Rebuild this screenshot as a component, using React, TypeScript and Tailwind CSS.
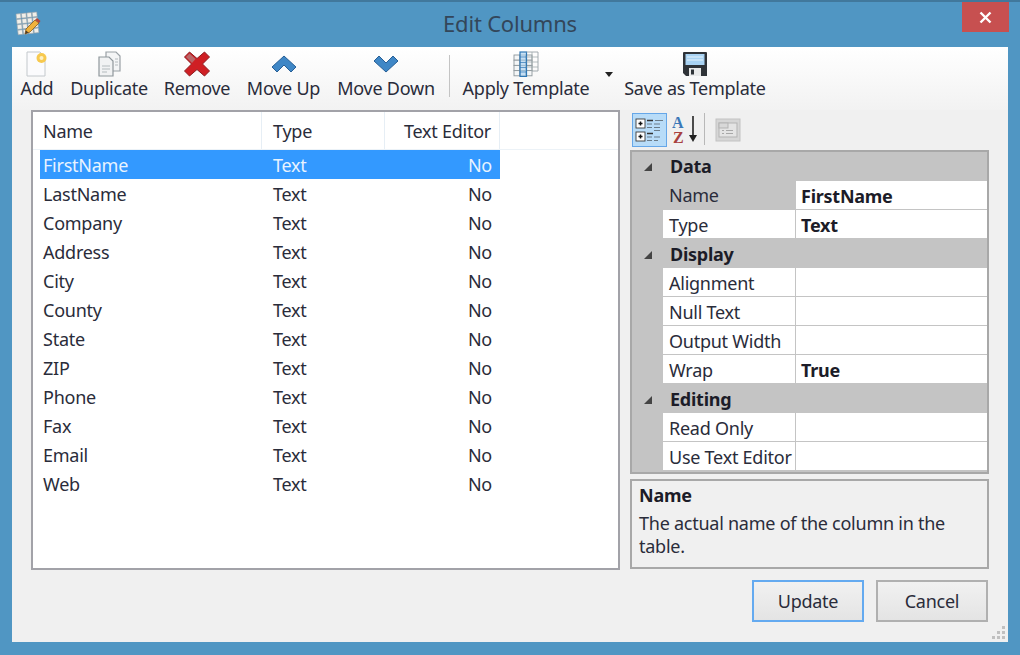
import React from "react";

const font = { fontFamily: '"Noto Sans", "Open Sans", sans-serif' };

const columns = ["FirstName", "LastName", "Company", "Address", "City", "County", "State", "ZIP", "Phone", "Fax", "Email", "Web"];

const groups = [
  { title: "Data", rows: [["Name", "FirstName"], ["Type", "Text"]] },
  { title: "Display", rows: [["Alignment", ""], ["Null Text", ""], ["Output Width", ""], ["Wrap", "True"]] },
  { title: "Editing", rows: [["Read Only", ""], ["Use Text Editor", ""]] },
];

const AppIcon = () => (
  <svg width="26" height="26" viewBox="0 0 26 26">
    <g fill="#f1efe9" stroke="#9aa4aa" strokeWidth="0.6" transform="rotate(-6 12 12)">
      {[0, 1, 2, 3].map((r) =>
        [0, 1, 2, 3].map((c) => <rect key={`${r}-${c}`} x={2 + c * 5.4} y={2 + r * 5.4} width="4.6" height="4.6" />)
      )}
    </g>
    <path d="M10 23 L11 18 L20 9 L24 12 L15 21 Z" fill="#f0b23c" stroke="#8a5a16" strokeWidth="0.8" />
    <path d="M20 9 L22 7 L25.5 10 L24 12 Z" fill="#b5473a" />
    <path d="M10 23 L11 19.5 L13.5 21.5 Z" fill="#4a3a2a" />
  </svg>
);

const AddIcon = () => (
  <svg width="26" height="26" viewBox="0 0 26 26">
    <path d="M3 1 H16 L21 6 V25 H3 Z" fill="#fbfbfd" stroke="#c3c8cc" strokeWidth="1" />
    <circle cx="17.5" cy="7" r="5" fill="#f7c94e" />
    <circle cx="17.5" cy="7" r="2" fill="#fdf0c4" />
  </svg>
);

const DuplicateIcon = () => (
  <svg width="26" height="26" viewBox="0 0 26 26">
    <path d="M10 1 H20 L24 5 V20 H10 Z" fill="#f4f5f6" stroke="#9aa1a6" strokeWidth="1.2" />
    <path d="M3 6 H13 L17 10 V25 H3 Z" fill="#f1f2f3" stroke="#8f979c" strokeWidth="1.2" />
    <path d="M6 15 H14 M6 18 H14 M6 21 H11" stroke="#b4babe" strokeWidth="1.2" />
    <path d="M19 8 H22 M19 11 H22 M19 14 H22" stroke="#b4babe" strokeWidth="1" />
  </svg>
);

const RemoveIcon = () => (
  <svg width="26" height="26" viewBox="0 0 26 26">
    <path d="M5.5 1 L13 7.5 L20.5 1 L25.5 6 L18.5 13 L25.5 20 L20.5 25 L13 18.5 L5.5 25 L0.5 20 L7.5 13 L0.5 6 Z" fill="#cf1f24" stroke="#8c1a1e" strokeWidth="1" />
    <path d="M5.5 2.5 L11.5 8 L8 12 L2 6 Z" fill="#b9686a" />
  </svg>
);

const ChevronIcon = ({ down }: { down?: boolean }) => (
  <svg width="26" height="18" viewBox="0 0 26 18">
    <path
      d={down ? "M1 6 L6 1 L13 8 L20 1 L25 6 L13 17 Z" : "M1 12 L13 1 L25 12 L20 17 L13 10 L6 17 Z"}
      fill="#3f87c6"
      stroke="#275f96"
      strokeWidth="1"
    />
  </svg>
);

const TemplateIcon = () => (
  <svg width="26" height="26" viewBox="0 0 26 26">
    <g fill="#f4f6f7" stroke="#8e979c" strokeWidth="0.9">
      {[0, 1, 2, 3].map((r) =>
        [0, 1, 2].map((c) => <rect key={`${r}-${c}`} x={1 + c * 6} y={4 + r * 5.2} width="6" height="5.2" />)
      )}
    </g>
    <rect x="7" y="1" width="6.5" height="24.5" fill="#a6d0f2" fillOpacity="0.6" stroke="#2f77b5" strokeWidth="1.2" />
    <path d="M7 6 H13.5 M7 11.5 H13.5 M7 16.5 H13.5 M7 21 H13.5" stroke="#2f77b5" strokeWidth="0.7" />
    <path d="M13.5 1 H25 V20 H19" fill="none" stroke="#9aa3a8" strokeWidth="0.9" />
    <path d="M19 1 V20 M13.5 6 H25 M13.5 11 H25 M13.5 16 H25" stroke="#9aa3a8" strokeWidth="0.7" />
  </svg>
);

const SaveIcon = () => (
  <svg width="26" height="26" viewBox="0 0 26 26">
    <path d="M2 1 H24 Q25 1 25 2 V25 H4 L1 22 V2 Q1 1 2 1 Z" fill="#2f3338" />
    <rect x="3.5" y="3" width="19" height="11" fill="#a9d3f3" />
    <path d="M5 6 H21 M5 9 H21" stroke="#e6f3fc" strokeWidth="1" />
    <rect x="7" y="17" width="12" height="8" fill="#e9eaea" />
    <rect x="9" y="18.5" width="3" height="5" fill="#2f3338" />
  </svg>
);

const CategorizedIcon = () => (
  <svg width="30" height="28" viewBox="0 0 30 28">
    <g fill="#fff" stroke="#3b3b3b" strokeWidth="0.9">
      <rect x="1" y="3" width="9" height="9" />
      <rect x="1" y="16" width="9" height="9" />
    </g>
    <path d="M3.5 7.5 H7.5 M5.5 5.5 V9.5 M3.5 20.5 H7.5 M5.5 18.5 V22.5" stroke="#111" strokeWidth="1.5" />
    <path d="M12 4.5 H18 M12 17.5 H18" stroke="#333" strokeWidth="1.6" />
    <path d="M12 8 H17 M19 8 H25 M12 11.5 H17 M19 11.5 H25 M20 4.5 H28 M19 14.5 H25 M12 21 H17 M19 21 H25 M12 24.5 H17 M19 24.5 H23" stroke="#6b7b88" strokeWidth="1" />
  </svg>
);

const SortIcon = () => (
  <svg width="28" height="30" viewBox="0 0 28 30">
    <text x="0" y="13" fontSize="16" fontWeight="700" fontFamily="Liberation Serif, serif" fill="#3b78b8">A</text>
    <text x="1" y="28" fontSize="16" fontWeight="700" fontFamily="Liberation Serif, serif" fill="#a8403e">Z</text>
    <path d="M21 1 V24" stroke="#222" strokeWidth="1.6" />
    <path d="M17 20 H25 L21 27 Z" fill="#222" />
  </svg>
);

const PagesIcon = () => (
  <svg width="26" height="26" viewBox="0 0 26 26">
    <rect x="1" y="2" width="24" height="22" fill="#d6d6d6" stroke="#c2c2c2" />
    <rect x="4" y="6" width="18" height="14" fill="#e4e4e4" stroke="#b3b3b3" />
    <rect x="4" y="6" width="9" height="5" fill="#d8d8d8" stroke="#b3b3b3" />
    <path d="M7 13.5 H9 M11 13.5 H18 M7 16.5 H9 M11 16.5 H18" stroke="#a8a8a8" />
  </svg>
);

const tools = [
  { label: "Add", width: "w-[34px]", icon: <AddIcon /> },
  { label: "Duplicate", width: "w-[76px]", icon: <DuplicateIcon /> },
  { label: "Remove", width: "w-[66px]", icon: <RemoveIcon /> },
  { label: "Move Up", width: "w-[73px]", icon: <ChevronIcon /> },
  { label: "Move Down", width: "w-[98px]", icon: <ChevronIcon down /> },
];

function ToolButton({ label, width, icon }: { label: string; width: string; icon: React.ReactNode }) {
  return (
    <div className={`${width} flex flex-col items-center`}>
      <div className="h-[26px] flex items-center justify-center">{icon}</div>
      <span className="-mt-[1px] whitespace-nowrap text-[18px] leading-[24px] tracking-[-0.25px]">{label}</span>
    </div>
  );
}

export default function App() {
  return (
    <div style={font} className="relative w-[1020px] h-[655px] flex flex-col bg-[#5096c3] text-[#2a2c3a] overflow-hidden">
      {/* title bar */}
      <div className="relative h-[47px] shrink-0 flex items-center justify-center border-t-2 border-[#41789c]">
        <div className="absolute left-[15px] top-[9px]">
          <AppIcon />
        </div>
        <span className="text-[22px] text-[#33465a] tracking-[-0.2px] mb-[3px]">Edit Columns</span>
        <div className="absolute right-[11px] top-0 w-[47px] h-[30px] bg-[#c75050] flex items-center justify-center">
          <svg width="13" height="13" viewBox="0 0 13 13">
            <path d="M1.5 1.5 L11.5 11.5 M11.5 1.5 L1.5 11.5" stroke="#fff" strokeWidth="2.4" />
          </svg>
        </div>
      </div>

      {/* dialog body */}
      <div className="relative mx-[12px] h-[595px] bg-[#f0f0f0] flex flex-col">
        {/* toolbar */}
        <div className="h-[63px] shrink-0 pl-[8px] pt-[4px] flex items-start bg-gradient-to-b from-white to-[#f2f2f2]">
          <div className="flex gap-[17px]">
            {tools.map((t) => (
              <ToolButton key={t.label} {...t} />
            ))}
          </div>
          <div className="ml-[14px] mt-[4px] w-[1px] h-[42px] bg-[#c4c4c4]" />
          <div className="ml-[11px]">
            <ToolButton label="Apply Template" width="w-[130px]" icon={<TemplateIcon />} />
          </div>
          <div className="ml-[14px] mt-[21px] w-0 h-0 border-x-[4px] border-x-transparent border-t-[5px] border-t-[#222]" />
          <div className="ml-[12px]">
            <ToolButton label="Save as Template" width="w-[140px]" icon={<SaveIcon />} />
          </div>
        </div>

        <div className="flex px-[19px] gap-[10px]">
          {/* column list */}
          <div className="w-[589px] h-[460px] bg-white border-2 border-[#a2a2a8] text-[18px] tracking-[-0.25px]">
            <div className="h-[38px] pl-[7px] flex items-center border-b border-[#ecf2f7]">
              <div className="w-[222px] h-full pl-[3px] pt-[2px] flex items-center border-r border-[#e6eef5]">Name</div>
              <div className="w-[123px] h-full pl-[11px] pt-[2px] flex items-center border-r border-[#e6eef5]">Type</div>
              <div className="w-[115px] h-full pr-[8px] pt-[2px] flex items-center justify-end border-r border-[#e6eef5]">Text Editor</div>
            </div>
            <div className="pl-[7px]">
              {columns.map((name, i) => (
                <div
                  key={name}
                  className={
                    i === 0
                      ? "w-[460px] h-[29px] pt-[2px] flex items-center bg-[#3399ff] text-[#e8f3ff]"
                      : "w-[460px] h-[29px] pt-[2px] flex items-center"
                  }
                >
                  <span className="w-[222px] pl-[3px]">{name}</span>
                  <span className="w-[123px] pl-[11px]">Text</span>
                  <span className="w-[115px] pr-[8px] text-right">No</span>
                </div>
              ))}
            </div>
          </div>

          {/* properties */}
          <div className="w-[359px] text-[18px] tracking-[-0.25px]">
            <div className="h-[40px] pl-[2px] pt-[3px] flex items-start">
              <div className="w-[35px] h-[34px] flex items-center justify-center bg-[#b8dcf8] border border-[#66a7e8]">
                <CategorizedIcon />
              </div>
              <div className="ml-[1px] w-[36px] h-[34px] flex items-center justify-center">
                <SortIcon />
              </div>
              <div className="w-[1px] h-[32px] bg-[#b8b8b8]" />
              <div className="ml-[10px] h-[34px] flex items-center">
                <PagesIcon />
              </div>
            </div>

            <div className="w-[359px] h-[324px] border-2 border-[#a8a8a8] bg-[#c4c4c4]">
              {groups.map((g, gi) => (
                <div key={g.title}>
                  <div className={gi === 0 ? "h-[29px] flex items-center font-bold text-[#1c1c28]" : "h-[29px] pt-[2px] flex items-center font-bold text-[#1c1c28]"}>
                    <svg className="ml-[12px] mr-[18px]" width="8" height="8" viewBox="0 0 8 8">
                      <path d="M8 0 V8 H0 Z" fill="#444" />
                    </svg>
                    {g.title}
                  </div>
                  {g.rows.map(([label, value]) => (
                    <div key={label} className="h-[29px] pl-[31px] flex">
                      <div
                        className={
                          label === "Name"
                            ? "w-[133px] pl-[6px] pt-[1px] flex items-center bg-[#c4c4c4] border-r border-b border-[#c4c4c4]"
                            : "w-[133px] pl-[6px] pt-[2px] flex items-center bg-white border-r border-b border-[#c4c4c4]"
                        }
                      >
                        {label}
                      </div>
                      <div className="flex-1 pl-[5px] pt-[2px] flex items-center bg-white border-b border-[#c4c4c4] font-bold text-[#1c1c28]">
                        {value}
                      </div>
                    </div>
                  ))}
                </div>
              ))}
            </div>

            <div className="mt-[5px] w-[359px] h-[90px] border-2 border-[#a8a8a8] px-[7px] pt-[3px] leading-[23px]">
              <div className="mb-[5px] font-bold text-[#1c1c28]">Name</div>
              <div className="w-[320px]">The actual name of the column in the table.</div>
            </div>
          </div>
        </div>

        {/* dialog buttons */}
        <div className="mt-[10px] pr-[20px] flex justify-end gap-[12px] text-[18px] tracking-[-0.25px]">
          <button className="w-[112px] h-[42px] border-2 border-[#64aaf0] bg-gradient-to-b from-[#f1f1f1] to-[#e4e4e4]">Update</button>
          <button className="w-[112px] h-[42px] border-2 border-[#b0b0b0] bg-gradient-to-b from-[#f1f1f1] to-[#e4e4e4]">Cancel</button>
        </div>

        {/* resize grip */}
        <div className="absolute right-[3px] bottom-[3px] grid grid-cols-3 gap-[2px]">
          {[0, 0, 1, 0, 1, 1, 1, 1, 1].map((on, i) => (
            <div key={i} className={on ? "w-[3px] h-[3px] bg-[#c0c0c0]" : "w-[3px] h-[3px]"} />
          ))}
        </div>
      </div>
    </div>
  );
}
